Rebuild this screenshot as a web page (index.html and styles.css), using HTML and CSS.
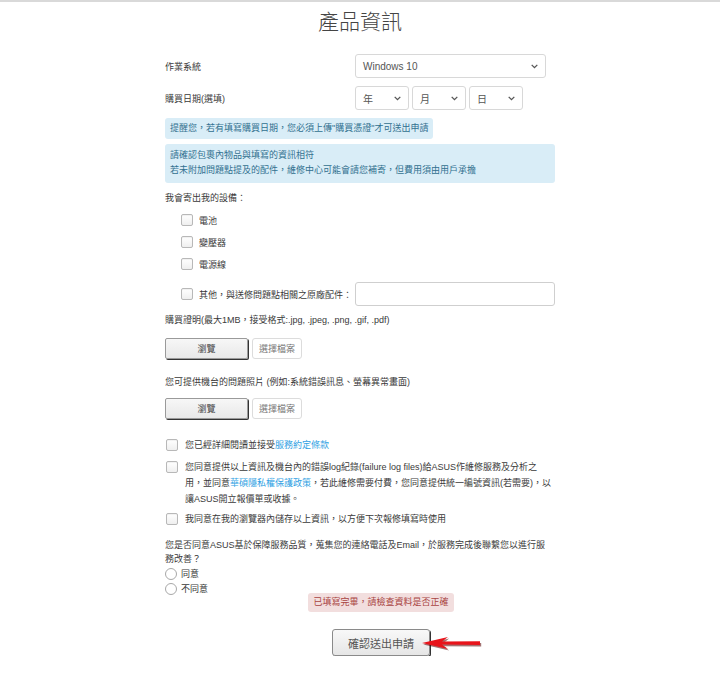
FILE: index.html
```html
<!DOCTYPE html>
<html lang="zh-Hant">
<head>
    <meta charset="UTF-8">
    <meta name="viewport" content="width=device-width, initial-scale=1.0">
    <title>產品資訊</title>
    <link rel="stylesheet" href="styles.css">
</head>
<body>
    <h1 class="page-title">產品資訊</h1>

    <div class="form">
        <div class="form-row row-os">
            <div class="form-label">作業系統</div>
            <div class="select-box select-wide">
                <span>Windows 10</span>
                <svg class="chevron" width="7" height="5" viewBox="0 0 7 5"><path d="M0.7 0.9 L3.5 3.7 L6.3 0.9" fill="none" stroke="#555" stroke-width="1.3"/></svg>
            </div>
        </div>

        <div class="form-row row-date">
            <div class="form-label">購買日期(選填)</div>
            <div class="date-selects">
                <div class="select-box select-small">
                    <span>年</span>
                    <svg class="chevron" width="7" height="5" viewBox="0 0 7 5"><path d="M0.7 0.9 L3.5 3.7 L6.3 0.9" fill="none" stroke="#555" stroke-width="1.3"/></svg>
                </div>
                <div class="select-box select-small">
                    <span>月</span>
                    <svg class="chevron" width="7" height="5" viewBox="0 0 7 5"><path d="M0.7 0.9 L3.5 3.7 L6.3 0.9" fill="none" stroke="#555" stroke-width="1.3"/></svg>
                </div>
                <div class="select-box select-small">
                    <span>日</span>
                    <svg class="chevron" width="7" height="5" viewBox="0 0 7 5"><path d="M0.7 0.9 L3.5 3.7 L6.3 0.9" fill="none" stroke="#555" stroke-width="1.3"/></svg>
                </div>
            </div>
        </div>

        <div class="notice notice-short">提醒您，若有填寫購買日期，您必須上傳"購買憑證"才可送出申請</div>
        <div class="notice">請確認包裹內物品與填寫的資訊相符<br>若未附加問題點提及的配件，維修中心可能會請您補寄，但費用須由用戶承擔</div>

        <div class="section-label">我會寄出我的設備：</div>
        <ul class="device-list">
            <li class="device-item"><span class="checkbox"></span>電池</li>
            <li class="device-item"><span class="checkbox"></span>變壓器</li>
            <li class="device-item"><span class="checkbox"></span>電源線</li>
            <li class="device-item device-other">
                <span class="checkbox"></span>
                <span class="other-text">其他，與送修問題點相關之原廠配件：</span>
                <div class="text-input"></div>
            </li>
        </ul>

        <div class="section-label upload-label">購買證明(最大1MB，接受格式:.jpg, .jpeg, .png, .gif, .pdf)</div>
        <div class="upload-row">
            <button class="browse-btn">瀏覽</button>
            <div class="file-name">選擇檔案</div>
        </div>

        <div class="section-label upload-label-2">您可提供機台的問題照片 (例如:系統錯誤訊息、螢幕異常畫面)</div>
        <div class="upload-row upload-row-2">
            <button class="browse-btn">瀏覽</button>
            <div class="file-name">選擇檔案</div>
        </div>

        <div class="terms">
            <div class="term-row">
                <span class="checkbox"></span>
                <p>您已經詳細閱讀並接受<a href="#">服務約定條款</a></p>
            </div>
            <div class="term-row">
                <span class="checkbox"></span>
                <p>您同意提供以上資訊及機台內的錯誤log紀錄(failure log files)給ASUS作維修服務及分析之<br>用，並同意<a href="#">華碩隱私權保護政策</a>，若此維修需要付費，您同意提供統一編號資訊(若需要)，以<br>讓ASUS開立報價單或收據。</p>
            </div>
            <div class="term-row term-last">
                <span class="checkbox"></span>
                <p>我同意在我的瀏覽器內儲存以上資訊，以方便下次報修填寫時使用</p>
            </div>
        </div>

        <p class="question">您是否同意ASUS基於保障服務品質，蒐集您的連絡電話及Email，於服務完成後聯繫您以進行服<br>務改善？</p>
        <div class="radio-row"><span class="radio"></span>同意</div>
        <div class="radio-row"><span class="radio"></span>不同意</div>

        <div class="form-actions">
            <div class="alert">已填寫完畢，請檢查資料是否正確</div>
            <div class="submit-wrap">
                <button class="submit-btn">確認送出申請</button>
                <!-- red pointer arrow -->
                <svg class="arrow" width="64" height="20" viewBox="0 0 64 20">
                    <path d="M1 10 L27 4 L21 8.6 L59 8.3 L59 12 L21 11.6 L27 16 Z" fill="#5a0000" opacity="0.55" transform="translate(1.2 1.6)"/>
                    <path d="M1 10 L27 4 L21 8.6 L59 8.3 L59 12 L21 11.6 L27 16 Z" fill="#e8141b"/>
                </svg>
            </div>
        </div>
    </div>
</body>
</html>
```

FILE: styles.css
```css
* {
    box-sizing: border-box;
}

body {
    margin: 0;
    border-top: 2px solid #d9d9d9;
    background-color: #ffffff;
    font-family: "Liberation Sans", "Noto Sans CJK TC", sans-serif;
    font-size: 9px;
    color: #3a3a3a;
}

.page-title {
    margin: 5px 0 0;
    font-size: 21px;
    line-height: 30px;
    font-weight: 300;
    text-align: center;
    color: #444;
}

.form {
    width: 390px;
    margin: 0 auto;
}

.form-row {
    display: flex;
    align-items: center;
    height: 24px;
}

.row-os {
    margin-top: 17px;
}

.row-date {
    margin-top: 8px;
}

.form-label {
    width: 190px;
}

.select-box {
    display: flex;
    justify-content: space-between;
    align-items: center;
    height: 24px;
    padding: 0 7px;
    border: 1px solid #d8d8d8;
    border-radius: 3px;
    font-size: 10px;
    color: #555;
}

.select-wide {
    width: 191px;
}

.date-selects {
    display: flex;
    gap: 3px;
}

.select-small {
    width: 54px;
}

.notice {
    margin-top: 5px;
    padding: 4px 5px 5px;
    line-height: 15px;
    background-color: #d9edf7;
    color: #31708f;
    border-radius: 3px;
}

.notice-short {
    width: fit-content;
    margin-top: 8px;
    padding: 3px 5px;
}

.section-label {
    margin-top: 8px;
    line-height: 15px;
}

.device-list {
    list-style: none;
    margin: 3px 0 0;
    padding: 0 0 0 16px;
}

.device-item {
    display: flex;
    align-items: center;
    gap: 6px;
    height: 22px;
}

.device-other {
    margin-top: 7px;
    height: 24px;
}

.other-text {
    flex: 1;
    min-width: 0;
    white-space: nowrap;
}

.text-input {
    flex-shrink: 0;
    width: 200px;
    height: 24px;
    border: 1px solid #cfcfcf;
    border-radius: 3px;
}

.checkbox {
    flex-shrink: 0;
    width: 12px;
    height: 12px;
    border: 1px solid #b8b8b8;
    border-radius: 2px;
    background: linear-gradient(#ffffff, #efefef);
    box-shadow: inset 0 1px 1px rgba(0, 0, 0, 0.06);
}

.upload-label {
    margin-top: 7px;
}

.upload-label-2 {
    margin-top: 16px;
}

.upload-row {
    display: flex;
    align-items: center;
    gap: 4px;
    height: 22px;
    margin-top: 9px;
}

.upload-row-2 {
    margin-top: 7px;
}

.browse-btn {
    width: 83px;
    height: 21px;
    padding: 0;
    border: 1px solid #9a9a9a;
    border-radius: 2px;
    background: linear-gradient(#f7f7f7, #e8e8e8);
    box-shadow: 1px 1px 0 #333;
    font: inherit;
    color: #444;
}

.file-name {
    display: flex;
    align-items: center;
    justify-content: center;
    width: 50px;
    height: 21px;
    border: 1px solid #dcdcdc;
    border-radius: 3px;
    color: #777;
}

.terms {
    margin-top: 18px;
}

.term-row {
    display: flex;
    align-items: flex-start;
    gap: 7px;
    padding-left: 1px;
    line-height: 16px;
}

.term-row + .term-row {
    margin-top: 6px;
}

.term-row.term-last {
    margin-top: 4px;
}

.term-row .checkbox {
    margin-top: 2px;
}

.term-row p {
    width: 370px;
    margin: 0;
}

.term-row a {
    color: #2f9fe3;
    text-decoration: none;
}

.question {
    margin: 11px 0 0;
    line-height: 14px;
}

.radio-row {
    display: flex;
    align-items: center;
    gap: 4px;
    height: 15px;
}

.radio {
    width: 12px;
    height: 12px;
    border: 1px solid #a8a8a8;
    border-radius: 50%;
    background: #fff;
}

.form-actions {
    display: flex;
    flex-direction: column;
    align-items: center;
    padding-left: 42px;
}

.alert {
    margin-top: -3px;
    padding: 2px 5px;
    line-height: 15px;
    background-color: #f2dede;
    color: #a94442;
    border-radius: 3px;
}

.submit-wrap {
    position: relative;
    margin-top: 17px;
}

.submit-btn {
    width: 98px;
    height: 27px;
    padding: 0;
    border: 1px solid #8a8a8a;
    border-radius: 3px;
    background: linear-gradient(#f8f8f8, #e6e6e6);
    box-shadow: 1px 1px 0 #333;
    font-family: inherit;
    font-size: 11px;
    color: #555;
}

.arrow {
    position: absolute;
    left: 89px;
    top: 4px;
}
```
